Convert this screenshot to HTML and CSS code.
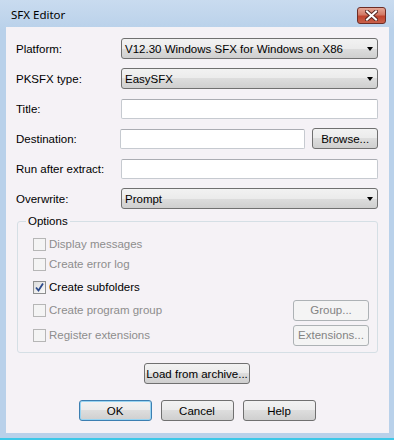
FILE: index.html
```html
<!DOCTYPE html>
<html lang="en">
<head>
    <meta charset="UTF-8">
    <title>SFX Editor</title>

    <link rel="stylesheet" href="styles.css">
</head>
<body>
<div class="window">
    <div class="titlebar">
        <span class="title">SFX Editor</span>
        <div class="close">
            <svg width="13" height="11" viewBox="0 0 13 11">
                <path d="M2 1.5 L11 9.5 M11 1.5 L2 9.5" stroke="#5a2a24" stroke-width="4" stroke-linecap="square"/>
                <path d="M2 1.5 L11 9.5 M11 1.5 L2 9.5" stroke="#ffffff" stroke-width="2" stroke-linecap="square"/>
            </svg>
        </div>
    </div>

    <div class="client">
        <div class="row">
            <label>Platform:</label>
            <div class="combo">V12.30 Windows SFX for Windows on X86<span class="arrow"></span></div>
        </div>

        <div class="row">
            <label>PKSFX type:</label>
            <div class="combo">EasySFX<span class="arrow"></span></div>
        </div>

        <div class="row">
            <label>Title:</label>
            <div class="edit"></div>
        </div>

        <div class="row">
            <label>Destination:</label>
            <div class="edit short"></div>
            <div class="btn browse">Browse...</div>
        </div>

        <div class="row">
            <label>Run after extract:</label>
            <div class="edit"></div>
        </div>

        <div class="row">
            <label>Overwrite:</label>
            <div class="combo">Prompt<span class="arrow"></span></div>
        </div>

        <fieldset class="options">
            <legend>Options</legend>

            <div class="check-row r1">
                <span class="box"></span><span class="disabled">Display messages</span>
            </div>
            <div class="check-row r2">
                <span class="box"></span><span class="disabled">Create error log</span>
            </div>
            <div class="check-row r3">
                <span class="box on">
                    <svg width="11" height="11" viewBox="0 0 11 11">
                        <path d="M2 5.5 L4.5 8.5 L9 1.5" fill="none" stroke="#2c4a8c" stroke-width="1.8"/>
                    </svg>
                </span><span>Create subfolders</span>
            </div>
            <div class="check-row r4">
                <span class="box"></span><span class="disabled">Create program group</span>
                <div class="btn off side">Group...</div>
            </div>
            <div class="check-row r5">
                <span class="box"></span><span class="disabled">Register extensions</span>
                <div class="btn off side">Extensions...</div>
            </div>
        </fieldset>

        <div class="load">
            <div class="btn">Load from archive...</div>
        </div>

        <div class="actions">
            <div class="btn wide default">OK</div>
            <div class="btn wide">Cancel</div>
            <div class="btn wide">Help</div>
        </div>
    </div>
</div>
</body>
</html>
```

FILE: styles.css
```css
body {
    margin: 0;
    font-family: "Liberation Sans", Arial, sans-serif;
    font-size: 11.5px;
    color: #000;
    background: #b9d1ea;
}

.window {
    width: 394px;
    height: 440px;
    display: flex;
    flex-direction: column;
    background: linear-gradient(#c9dbef, #b9d1ea 30px);
    border-bottom: 2px solid #3cc8e8;
    box-sizing: border-box;
}

.titlebar {
    height: 27px;
    display: flex;
    align-items: flex-start;
    justify-content: space-between;
    padding: 0 8px 0 11px;
}

.title {
    font-family: "Noto Sans", sans-serif;
    font-size: 11.5px;
    margin-top: 7px;
    line-height: 16px;
}

.close {
    width: 27px;
    height: 15px;
    margin-top: 7px;
    border: 1px solid #6d2d26;
    border-radius: 3px;
    background: linear-gradient(#e5a695, #d27a66 45%, #c0432d 55%, #c9604a);
    display: flex;
    align-items: center;
    justify-content: center;
}

.close svg {
    display: block;
}

.client {
    margin: 0 5px 0 6px;
    height: 406px;
    background: #f5f2f6;
    padding: 11px 11px 0 10px;
    box-sizing: border-box;
}

.row {
    display: flex;
    align-items: center;
    height: 21px;
    margin-bottom: 9px;
}

.row > label {
    width: 105px;
}

.combo {
    flex: 1;
    height: 21px;
    box-sizing: border-box;
    border: 1px solid #707070;
    border-radius: 3px;
    background: linear-gradient(#f2f2f2, #ebebeb 50%, #dddddd 50%, #cfcfcf);
    padding-left: 3px;
    display: flex;
    align-items: center;
    justify-content: space-between;
    padding-right: 4px;
}

.arrow {
    width: 0;
    height: 0;
    border-left: 3.5px solid transparent;
    border-right: 3.5px solid transparent;
    border-top: 4px solid #000;
}

.edit {
    flex: 1;
    height: 20px;
    box-sizing: border-box;
    background: #fff;
    border: 1px solid #c6cad0;
    border-top-color: #abadb3;
    border-radius: 2px;
}

.edit.short {
    flex: none;
    width: 185px;
}

.btn {
    height: 21px;
    box-sizing: border-box;
    border: 1px solid #707070;
    border-radius: 3px;
    background: linear-gradient(#f2f2f2, #ebebeb 50%, #dddddd 50%, #cfcfcf);
    display: flex;
    align-items: center;
    justify-content: center;
    padding: 0 4px;
    white-space: nowrap;
}

.browse {
    width: 66px;
    margin-left: 7px;
}

.btn.off {
    border-color: #adb2b5;
    background: #f4f4f4;
    color: #838383;
}

.options {
    margin: -3px 0 0 1px;
    padding: 0 8px 7px 15px;
    border: 1px solid #d5dfe5;
    border-radius: 3px;
    width: 361px;
    box-sizing: border-box;
}

.options legend {
    padding: 0 2px;
    margin-left: -7px;
    line-height: 13px;
}

.check-row {
    display: flex;
    align-items: center;
    height: 20px;
}

.r1 { margin-top: 6px; }
.r2 { margin-top: 0; }
.r3 { margin-top: 3px; }
.r4 { margin-top: 3px; }
.r5 { margin-top: 5px; }

.box {
    width: 13px;
    height: 13px;
    box-sizing: border-box;
    border: 1px solid #b6b6b6;
    background: #f4f4f4;
    margin-right: 3px;
    display: flex;
    align-items: center;
    justify-content: center;
}

.box.on {
    border-color: #8e8f8f;
    background: linear-gradient(135deg, #dcdcdc, #fbfbfb);
}

.disabled {
    color: #8d8d8d;
}

.side {
    margin-left: auto;
    width: 76px;
}

.load {
    display: flex;
    justify-content: center;
    margin-top: 10px;
}

.load .btn {
    width: 106px;
}

.actions {
    display: flex;
    justify-content: center;
    gap: 9px;
    margin-top: 16px;
}

.btn.wide {
    width: 73px;
}

.btn.default {
    border-color: #3c7fb1;
    box-shadow: inset 0 0 0 1px #98d4f2;
}
```
